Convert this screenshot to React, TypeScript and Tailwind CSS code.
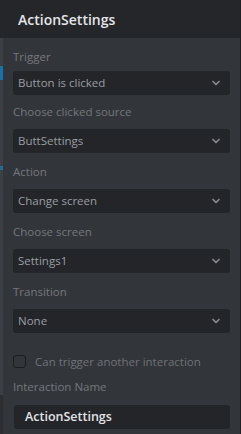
import { ChevronDown } from "lucide-react";

const font = { fontFamily: '"Open Sans", "Noto Sans", sans-serif' };

function Select({ value }: { value: string }) {
  return (
    <div className="flex h-[24px] items-center justify-between rounded-[3px] bg-[#232529] pl-[5px] pr-[8px]">
      <span className="text-[11.5px] text-[#9a9da2]">{value}</span>
      <ChevronDown size={12} strokeWidth={3.5} className="text-[#85888d]" />
    </div>
  );
}

function Field({ label, value, first }: { label: string; value: string; first?: boolean }) {
  return (
    <div className={`flex flex-col ${first ? "mb-[-2px]" : ""}`}>
      <div className={`text-[11.5px] leading-[16px] text-[#75787d] ${first ? "mb-[6px]" : "mb-[9px]"}`}>{label}</div>
      <Select value={value} />
    </div>
  );
}

export default function App() {
  return (
    <div style={font} className="flex h-[434px] w-[241px] flex-col overflow-hidden bg-[#323539] border-r border-[#1f2023]">
      <div className="flex h-[38px] shrink-0 items-center bg-[#25262a] pl-[18px]">
        <span className="text-[14px] font-semibold text-[#e4e5e7]">ActionSettings</span>
      </div>
      <div className="flex flex-1">
        <div className="flex w-[3px] flex-col bg-[#3c3f44]">
          <div className="h-[28px]" />
          <div className="h-[14px] bg-[#1f6fa0]" />
          <div className="h-[86px]" />
          <div className="h-[4px] bg-[#2b6a94]" />
          <div className="h-[225px]" />
          <div className="flex-1 bg-[#2c2e32]" />
        </div>
        <div className="flex flex-1 flex-col px-[10px] pt-[11px]">
          <div className="flex flex-col gap-[11px]">
            <Field first label="Trigger" value="Button is clicked" />
            <Field label="Choose clicked source" value="ButtSettings" />
            <Field label="Action" value="Change screen" />
            <Field label="Choose screen" value="Settings1" />
            <Field label="Transition" value="None" />
          </div>
          <div className="mt-[20px] flex items-center gap-[9px]">
            <div className="h-[13px] w-[13px] rounded-[3px] border-[1.5px] border-[#1c1d20]" />
            <span className="text-[11.5px] text-[#6f7277]">Can trigger another interaction</span>
          </div>
          <div className="mt-[9px] text-[11.5px] leading-[16px] text-[#75787d]">Interaction Name</div>
          <div className="ml-[1px] mt-[10px] flex h-[24px] items-center rounded-[3px] bg-[#232529] pl-[11px]">
            <span className="text-[12.5px] font-semibold text-[#e2e3e5]">ActionSettings</span>
          </div>
        </div>
      </div>
    </div>
  );
}
